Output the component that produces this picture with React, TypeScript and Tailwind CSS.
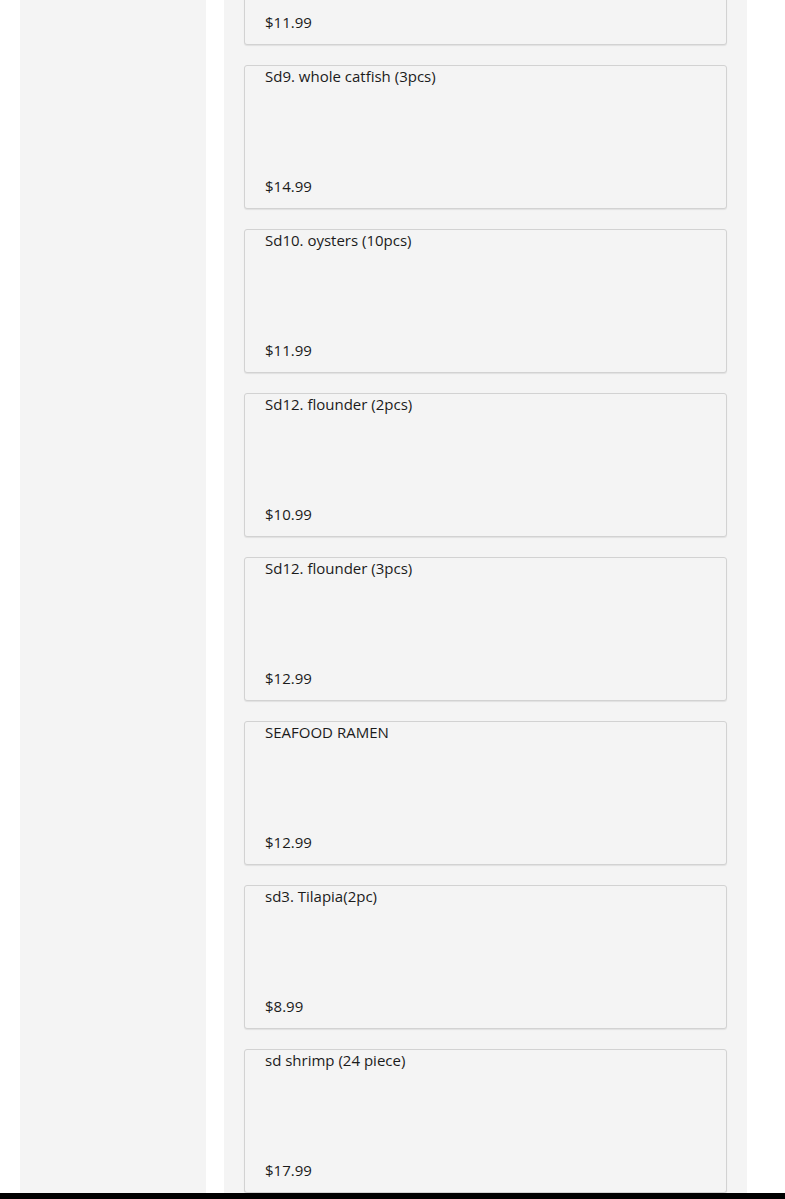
const items = [
  { name: 'Sd8. whiting (3pcs)', price: '$11.99' },
  { name: 'Sd9. whole catfish (3pcs)', price: '$14.99' },
  { name: 'Sd10. oysters (10pcs)', price: '$11.99' },
  { name: 'Sd12. flounder (2pcs)', price: '$10.99' },
  { name: 'Sd12. flounder (3pcs)', price: '$12.99' },
  { name: 'SEAFOOD RAMEN', price: '$12.99' },
  { name: 'sd3. Tilapia(2pc)', price: '$8.99' },
  { name: 'sd shrimp (24 piece)', price: '$17.99' },
]

export default function App() {
  return (
    <div className="flex h-[1199px] flex-col overflow-hidden bg-white font-['Open_Sans',sans-serif] text-[#1b1b1b]">
      <div className="flex min-h-0 flex-1 pl-[20px]">
        <aside className="w-[186px] shrink-0 bg-[#f4f4f4]" />
        <main className="ml-[18px] w-[523px] shrink-0 overflow-hidden bg-[#f4f4f4] px-[20px]">
          <ul className="mt-[-99px] flex flex-col gap-[20px]">
            {items.map((item) => (
              <li
                className="flex h-[144px] flex-col justify-between rounded-[3px] border border-[#d2d2d2] bg-[#f4f4f4] px-[20px] pb-[12px] pt-0 shadow-[0_1px_1px_rgba(0,0,0,0.08)]"
                key={item.name}
              >
                <span className="text-[15px] leading-[20px]">{item.name}</span>
                <span className="text-[15px] leading-[20px]">{item.price}</span>
              </li>
            ))}
          </ul>
        </main>
      </div>
      <div className="h-[6px] shrink-0 bg-black" />
    </div>
  )
}
